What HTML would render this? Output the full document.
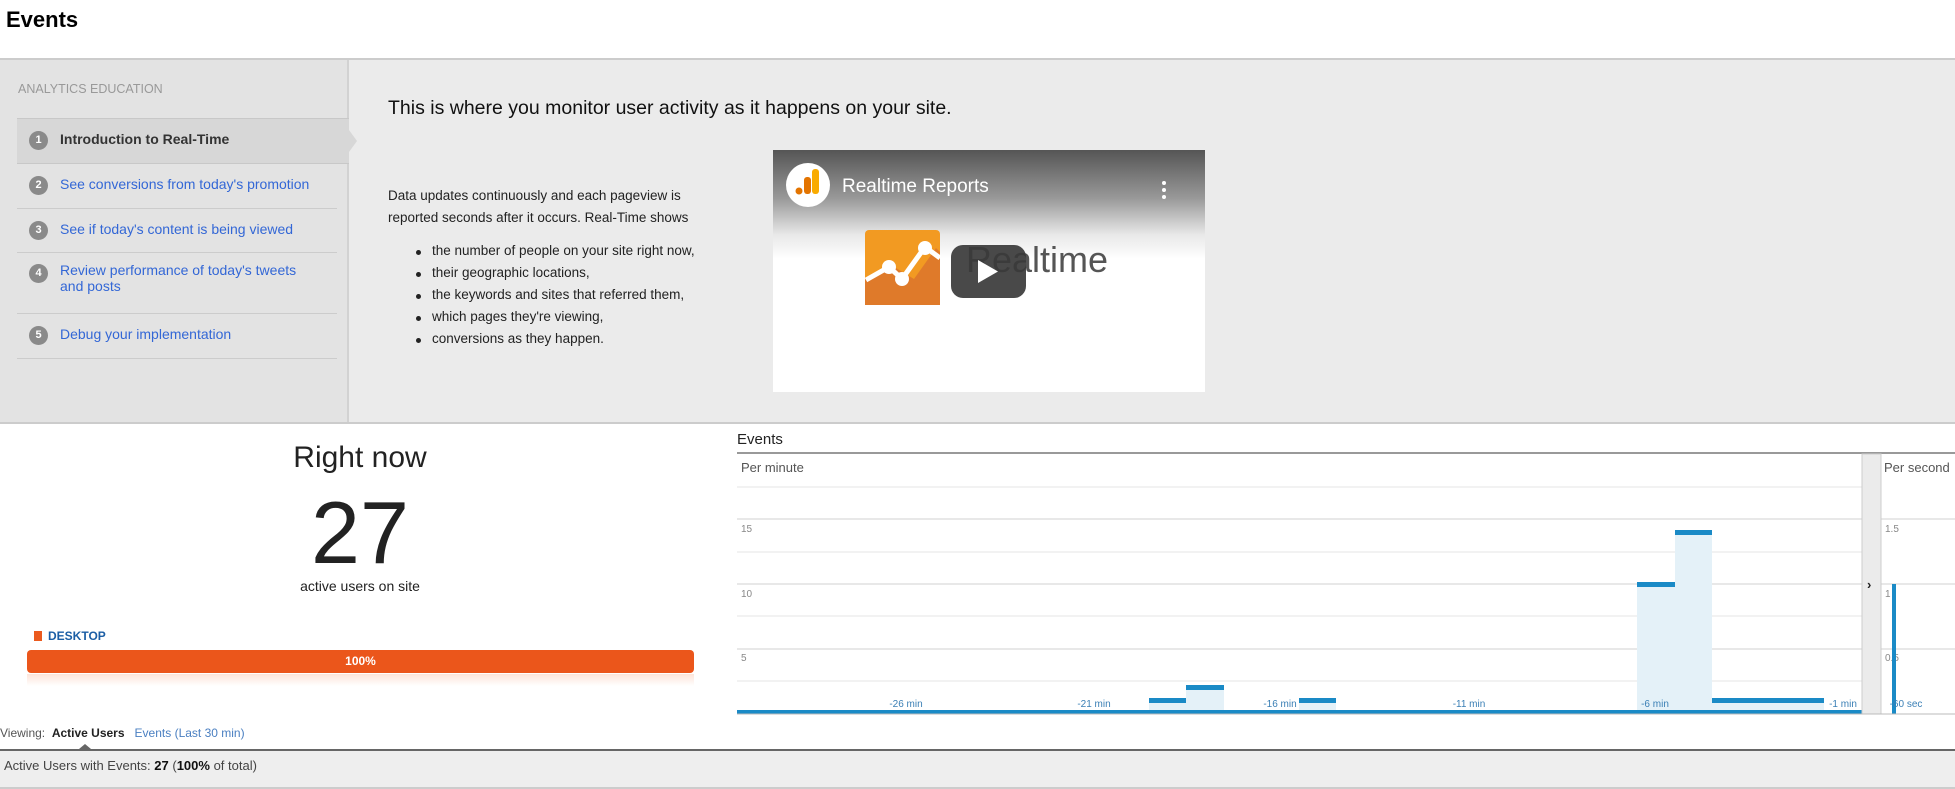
<!DOCTYPE html>
<html><head><meta charset="utf-8"><style>
*{margin:0;padding:0;box-sizing:border-box}
body{width:1955px;height:789px;overflow:hidden;background:#fff;font-family:"Liberation Sans",sans-serif;position:relative;color:#222}
.a{position:absolute;white-space:nowrap}
.item{position:absolute;left:17px;width:320px;border-bottom:1px solid #ccc;font-size:14px;color:#3367d6}
.num{position:absolute;left:12px;width:19px;height:19px;border-radius:50%;background:#8a8a8a;color:#fff;font-size:11px;font-weight:bold;text-align:center;line-height:19px}
.txt{position:absolute;left:43px}
ul li{position:absolute;left:432px;font-size:13.5px;color:#222;list-style:none}
ul li:before{content:"";position:absolute;left:-16px;top:7px;width:5px;height:5px;border-radius:50%;background:#222}
</style></head><body>
<div class="a" style="left:6px;top:7px;font-size:22px;font-weight:bold;color:#000">Events</div>
<div class="a" style="left:0;top:58px;width:1955px;height:366px;background:#ebebeb;border-top:2px solid #ccc;border-bottom:2px solid #ccc"></div>
<div class="a" style="left:0;top:60px;width:349px;height:362px;background:#e3e3e3;border-right:2px solid #d2d2d2"></div>
<div class="a" style="left:18px;top:82px;font-size:12.5px;color:#999">ANALYTICS EDUCATION</div>
<div class="a" style="left:17px;top:118px;width:332px;height:46px;background:#d7d7d7;border-top:1px solid #c8c8c8;border-bottom:1px solid #c8c8c8"></div>
<div class="a" style="left:349px;top:130px;width:0;height:0;border-top:11px solid transparent;border-bottom:11px solid transparent;border-left:8px solid #d7d7d7"></div>
<div class="item" style="top:118px;height:46px;border:none"><div class="num" style="top:13px">1</div><div class="txt" style="top:13px;color:#333;font-weight:bold">Introduction to Real-Time</div></div>
<div class="item" style="top:164px;height:45px"><div class="num" style="top:12px">2</div><div class="txt" style="top:12px">See conversions from today's promotion</div></div>
<div class="item" style="top:209px;height:44px"><div class="num" style="top:12px">3</div><div class="txt" style="top:12px">See if today's content is being viewed</div></div>
<div class="item" style="top:253px;height:61px"><div class="num" style="top:11px">4</div><div class="txt" style="top:9px;line-height:16px">Review performance of today's tweets<br>and posts</div></div>
<div class="item" style="top:314px;height:45px"><div class="num" style="top:12px">5</div><div class="txt" style="top:12px">Debug your implementation</div></div>
<div class="a" style="left:388px;top:97px;font-size:19.5px;color:#111">This is where you monitor user activity as it happens on your site.</div>
<div class="a" style="left:388px;top:185px;font-size:13.5px;line-height:21.5px;color:#222">Data updates continuously and each pageview is<br>reported seconds after it occurs. Real-Time shows</div>
<ul>
<li style="top:243px">the number of people on your site right now,</li>
<li style="top:265px">their geographic locations,</li>
<li style="top:287px">the keywords and sites that referred them,</li>
<li style="top:309px">which pages they're viewing,</li>
<li style="top:331px">conversions as they happen.</li>
</ul>
<div class="a" style="left:773px;top:150px;width:432px;height:242px;background:linear-gradient(#555 0%,#999 20%,#e8e8e8 35%,#fff 45%,#fff 100%)"></div>
<svg class="a" style="left:773px;top:150px" width="432" height="242">
<circle cx="35" cy="35" r="22" fill="#fff"/>
<rect x="39" y="19" width="7" height="25" rx="3" fill="#f9ab00"/>
<rect x="31" y="27" width="7" height="17" rx="3" fill="#e37400"/>
<circle cx="26" cy="41" r="3.5" fill="#e37400"/>
<text x="69" y="42" font-family="Liberation Sans" font-size="19" fill="#fff">Realtime Reports</text>
<circle cx="391" cy="33" r="2" fill="#fff"/><circle cx="391" cy="40" r="2" fill="#fff"/><circle cx="391" cy="47" r="2" fill="#fff"/>
<rect x="92" y="80" width="75" height="75" rx="4" fill="#f29a22"/>
<path d="M92 128 L118 115 L141 129 L163 98 L167 102 L167 155 L92 155Z" fill="#df7a2a"/>
<path d="M93 130 L116 117 L129 129 L152 97 L167 108" stroke="#fff" stroke-width="5" fill="none"/>
<circle cx="116" cy="117" r="7" fill="#fff"/><circle cx="129" cy="129" r="7" fill="#fff"/><circle cx="152" cy="98" r="7" fill="#fff"/>
<text x="193" y="122" font-family="Liberation Sans" font-size="36" fill="#555">Realtime</text>
<rect x="178" y="95" width="75" height="53" rx="12" fill="#3a3a3a" opacity=".92"/>
<path d="M205 110 L205 133 L225 121.5Z" fill="#fff"/>
</svg>
<div class="a" style="left:0;top:441px;width:720px;text-align:center;font-size:30px;color:#222">Right now</div>
<div class="a" style="left:0;top:482px;width:720px;text-align:center;font-size:88px;color:#222">27</div>
<div class="a" style="left:0;top:578px;width:720px;text-align:center;font-size:14px;color:#222">active users on site</div>
<div class="a" style="left:34px;top:631px;width:8px;height:10px;background:#eb5a1e"></div>
<div class="a" style="left:48px;top:629px;font-size:12px;font-weight:bold;color:#1b5ea5">DESKTOP</div>
<div class="a" style="left:27px;top:650px;width:667px;height:23px;background:#eb561b;border-radius:4px;color:#fff;font-size:12px;font-weight:bold;text-align:center;line-height:23px">100%</div>
<div class="a" style="left:27px;top:674px;width:667px;height:12px;background:linear-gradient(#fde4d9,#fff)"></div>
<div class="a" style="left:0;top:726px;font-size:12px;color:#555">Viewing:&nbsp;&nbsp;<b style="color:#222">Active Users</b>&nbsp;&nbsp;&nbsp;<span style="color:#4a7fc1">Events (Last 30 min)</span></div>
<div class="a" style="left:79px;top:744px;width:0;height:0;border-left:6px solid transparent;border-right:6px solid transparent;border-bottom:5px solid #666"></div>
<div class="a" style="left:0;top:749px;width:1955px;height:40px;background:#eee;border-top:2px solid #666;border-bottom:2px solid #ccc"></div>
<div class="a" style="left:4px;top:758px;font-size:13px;color:#444">Active Users with Events: <b style="color:#111">27</b> (<b style="color:#111">100%</b> of total)</div>
<div class="a" style="left:737px;top:431px;font-size:15px;color:#222">Events</div>
<svg class="a" style="left:700px;top:420px" width="1255" height="300">
<line x1="37" y1="33" x2="1255" y2="33" stroke="#999" stroke-width="2"/>
<g stroke="#f2f2f2" stroke-width="2">
<line x1="37" y1="67" x2="1162" y2="67"/><line x1="37" y1="132" x2="1162" y2="132"/><line x1="37" y1="196" x2="1162" y2="196"/><line x1="37" y1="261" x2="1162" y2="261"/></g>
<g stroke="#e8e8e8" stroke-width="2">
<line x1="37" y1="99" x2="1255" y2="99"/><line x1="37" y1="164" x2="1255" y2="164"/><line x1="37" y1="229" x2="1255" y2="229"/></g>
<text x="41" y="52" font-size="13" fill="#555" font-family="Liberation Sans">Per minute</text>
<text x="1184" y="52" font-size="13" fill="#555" font-family="Liberation Sans">Per second</text>
<g font-size="10" fill="#888" font-family="Liberation Sans">
<text x="41" y="112">15</text><text x="41" y="177">10</text><text x="41" y="241">5</text>
<text x="1185" y="112">1.5</text><text x="1185" y="177">1</text><text x="1185" y="241">0.5</text></g>
<g fill="#e4f1f8">
<rect x="449" y="278" width="75" height="15"/><rect x="486" y="265" width="38" height="28"/><rect x="599" y="278" width="37" height="15"/>
<rect x="937" y="162" width="38" height="131"/><rect x="975" y="110" width="37" height="183"/><rect x="1012" y="278" width="112" height="15"/></g>
<g fill="#1a8ac6">
<rect x="37" y="290" width="1125" height="4"/>
<rect x="449" y="278" width="37" height="5"/><rect x="486" y="265" width="38" height="5"/><rect x="599" y="278" width="37" height="5"/>
<rect x="937" y="162" width="38" height="5"/><rect x="975" y="110" width="37" height="5"/><rect x="1012" y="278" width="112" height="5"/>
<rect x="1192" y="164" width="4" height="130"/></g>
<g font-size="10" fill="#3a7fb5" font-family="Liberation Sans" text-anchor="middle">
<text x="206" y="287">-26 min</text><text x="394" y="287">-21 min</text><text x="580" y="287">-16 min</text><text x="769" y="287">-11 min</text><text x="955" y="287">-6 min</text><text x="1143" y="287">-1 min</text><text x="1206" y="287">-60 sec</text></g>
<rect x="1162" y="34" width="19" height="260" fill="#ebebeb" stroke="#ccc"/>
<text x="1167" y="169" font-size="13" font-weight="bold" fill="#222" font-family="Liberation Sans">›</text>
<line x1="37" y1="294" x2="1255" y2="294" stroke="#bbb" stroke-width="1"/>
</svg>
</body></html>
